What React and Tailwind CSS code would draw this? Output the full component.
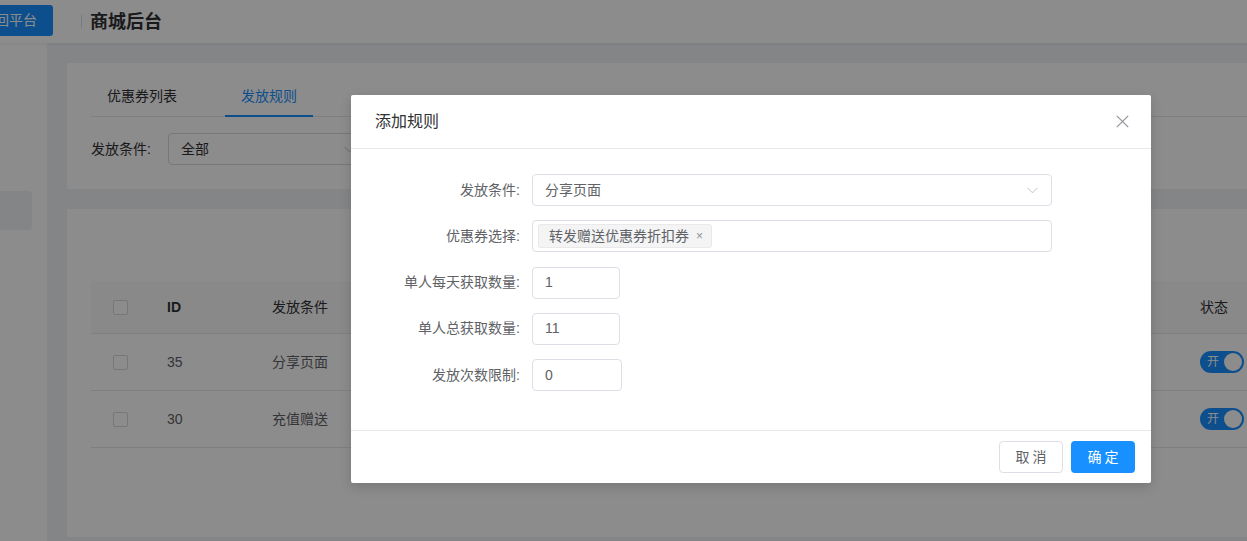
import React from 'react';

const rows = [
  { id: 35, cond: '分享页面' },
  { id: 30, cond: '充值赠送' },
];

const Checkbox = () => (
  <span className="block w-[15px] h-[15px] border border-[#d9d9d9] rounded-[2px] bg-white"></span>
);

const Switch = () => (
  <span className="flex items-center justify-between w-[44px] h-[22px] rounded-full bg-[#1890ff] pl-[7px] pr-[2px]">
    <span className="text-[12px] leading-none text-white">开</span>
    <span className="w-[18px] h-[18px] rounded-full bg-white"></span>
  </span>
);

const Chevron = ({ className }) => (
  <svg width="11" height="7" viewBox="0 0 11 7" className={className}>
    <polyline points="0.5,0.8 5.5,5.8 10.5,0.8" fill="none" stroke="#c0c4cc" strokeWidth="1" />
  </svg>
);

const FormRow = ({ label, children }) => (
  <div className="flex items-center h-[32px]">
    <label className="w-[181px] pr-3 text-right text-[14px] text-[#606266]">{label}</label>
    {children}
  </div>
);

export default function App() {
  return (
    <div
      className="relative w-full h-[541px] overflow-hidden bg-[#f0f2f5]"
      style={{ fontFamily: '"Liberation Sans", "Noto Sans CJK SC", sans-serif' }}
    >
      <div className="w-[1300px] h-full flex flex-col">
        {/* top bar */}
        <header className="h-[43px] shrink-0 bg-white flex items-center shadow-[0_1px_4px_rgba(0,21,41,0.08)] relative z-10">
          <button className="ml-[-35px] mt-[-3px] h-[31px] px-4 rounded-[3px] bg-[#1890ff] text-white text-[14px] leading-none">
            返回平台
          </button>
          <span className="ml-[28px] w-px h-[13px] bg-[#dcdfe6]"></span>
          <h1 className="ml-[8px] text-[18px] font-bold text-[#303133] leading-none">商城后台</h1>
        </header>

        <div className="flex flex-1 min-h-0">
          {/* sidebar */}
          <aside className="w-[47px] shrink-0 bg-white pt-[148px]">
            <div className="w-[32px] h-[39px] rounded-r-[4px] bg-[#f0f2f5]"></div>
          </aside>

          {/* main */}
          <main className="flex-1 pl-5 pr-5 pt-5 flex flex-col gap-5">
            <section className="bg-white px-6 pt-[8px] pb-6">
              <div className="flex h-[46px] border-b border-[#e8e8e8] text-[14px]">
                <div className="px-4 pt-[14px] leading-[22px] text-[#303133]">优惠券列表</div>
                <div className="ml-8 px-4 pt-[14px] h-[46px] leading-[22px] text-[#1890ff] border-b-2 border-[#1890ff]">发放规则</div>
              </div>
              <div className="flex items-center mt-4">
                <span className="w-[77px] text-[14px] text-[#303133]">发放条件:</span>
                <div className="w-[200px] h-[32px] border border-[#d9d9d9] rounded-[4px] flex items-center justify-between px-3">
                  <span className="text-[14px] text-[#303133]">全部</span>
                  <Chevron />
                </div>
              </div>
            </section>

            <section className="bg-white px-6 pt-[72px] h-[328px]">
              <div className="text-[14px]">
                <div className="flex items-center h-[53px] bg-[#fafafa] border-b border-[#e8e8e8] text-[#303133]">
                  <div className="w-[76px] pl-[22px]"><Checkbox /></div>
                  <div className="w-[105px] font-bold">ID</div>
                  <div className="flex-1">发放条件</div>
                  <div className="w-[56px]">状态</div>
                </div>
                {rows.map((r) => (
                  <div key={r.id} className="flex items-center h-[57px] border-b border-[#e8e8e8] text-[#606266]">
                    <div className="w-[76px] pl-[22px]"><Checkbox /></div>
                    <div className="w-[105px]">{r.id}</div>
                    <div className="flex-1">{r.cond}</div>
                    <div className="w-[56px]"><Switch /></div>
                  </div>
                ))}
              </div>
            </section>
          </main>
        </div>
      </div>

      {/* mask */}
      <div className="absolute left-0 top-0 z-20 w-full h-full bg-black opacity-45"></div>

      {/* dialog */}
      <div className="absolute z-30 left-[351px] top-[95px] w-[800px] bg-white rounded-[2px] shadow-[0_4px_12px_rgba(0,0,0,0.15)]">
        <div className="flex items-center justify-between h-[54px] px-6 border-b border-[#e8e8e8]">
          <span className="text-[16px] text-[#303133]">添加规则</span>
          <svg width="13" height="13" viewBox="0 0 13 13" className="mr-[-2px]">
            <path d="M0.8 0.8 L12.2 12.2 M12.2 0.8 L0.8 12.2" stroke="#909399" strokeWidth="1.2" />
          </svg>
        </div>

        <div className="pt-[25px] pb-[39px] flex flex-col gap-[14.25px]">
          <FormRow label="发放条件:">
            <div className="w-[520px] h-[32px] border border-[#dcdfe6] rounded-[4px] flex items-center justify-between pl-3 pr-[13px]">
              <span className="text-[14px] text-[#606266]">分享页面</span>
              <Chevron />
            </div>
          </FormRow>
          <FormRow label="优惠券选择:">
            <div className="w-[520px] h-[32px] border border-[#dcdfe6] rounded-[4px] flex items-center pl-[5px]">
              <span className="flex items-center h-[24px] pl-[10px] pr-[8px] bg-[#f4f4f5] border border-[#e9e9eb] rounded-[3px] text-[14px] text-[#606266]">
                转发赠送优惠券折扣券
                <span className="ml-[7px] text-[12px] text-[#909399]">×</span>
              </span>
            </div>
          </FormRow>
          <FormRow label="单人每天获取数量:">
            <div className="w-[88px] h-[32px] border border-[#dcdfe6] rounded-[4px] flex items-center px-3 text-[14px] text-[#606266]">1</div>
          </FormRow>
          <FormRow label="单人总获取数量:">
            <div className="w-[88px] h-[32px] border border-[#dcdfe6] rounded-[4px] flex items-center px-3 text-[14px] text-[#606266]">11</div>
          </FormRow>
          <FormRow label="发放次数限制:">
            <div className="w-[90px] h-[32px] border border-[#dcdfe6] rounded-[4px] flex items-center px-3 text-[14px] text-[#606266]">0</div>
          </FormRow>
        </div>

        <div className="flex justify-end gap-2 px-4 py-[10px] border-t border-[#e8e8e8]">
          <button className="w-[64px] h-[32px] border border-[#dcdfe6] rounded-[4px] bg-white text-[14px] text-[#606266] tracking-[3px] pl-[3px]">
            取消
          </button>
          <button className="w-[64px] h-[32px] rounded-[4px] bg-[#1890ff] text-[14px] text-white tracking-[3px] pl-[3px]">
            确定
          </button>
        </div>
      </div>
    </div>
  );
}
